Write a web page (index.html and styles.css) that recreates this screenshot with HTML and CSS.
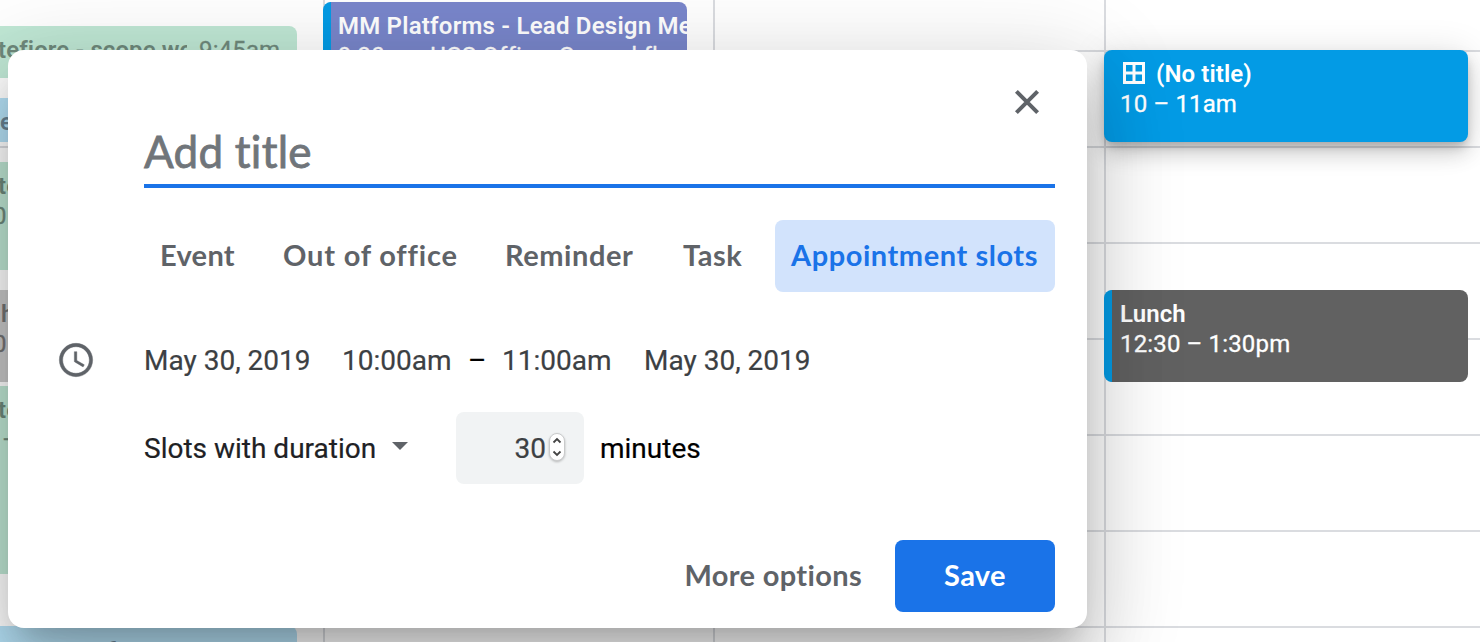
FILE: index.html
```
<!DOCTYPE html>
<html lang="en">
<head>
<meta charset="utf-8">
<title>Calendar</title>
<link rel="stylesheet" href="styles.css">
</head>
<body>
<main class="calendar">
  <section class="day day-first">
    <article class="event event-green event-scope"><b class="clip">tefiore - scope wo</b><span>9:45am</span></article>
    <article class="event event-blue event-e"><b>e</b></article>
    <article class="event event-green event-mid"><b>te</b><span>0</span></article>
    <article class="event event-grey"><b>h</b><span>0</span></article>
    <article class="event event-green event-long"><b>te</b><span class="dash">–</span></article>
    <article class="event event-blue event-last"><b>une can af</b></article>
  </section>
  <section class="day day-second">
    <article class="event striped event-platforms"><b>MM Platforms - Lead Design Meeting</b><span>9:30am, UCS Office, Ground floor</span></article>
  </section>
  <section class="day day-third"></section>
  <section class="day day-fourth">
    <article class="event event-slot">
      <b><svg class="grid-icon" viewBox="0 0 22 22"><path d="M1.5 1.5h19v19h-19zM11 1.5v19M1.5 11h19"/></svg>(No title)</b>
      <span>10 – 11am</span>
    </article>
    <article class="event striped event-lunch"><b>Lunch</b><span>12:30 – 1:30pm</span></article>
  </section>
</main>

<div class="dialog">
  <div class="dialog-top">
    <button class="close" aria-label="Close"><svg viewBox="0 0 28 28"><path d="M3.4 3.4l21.2 21.2M24.6 3.4L3.4 24.6"/></svg></button>
  </div>
  <div class="title"><span>Add title</span></div>
  <nav class="tabs">
    <span class="tab tab-event">Event</span>
    <span class="tab tab-office">Out of office</span>
    <span class="tab tab-reminder">Reminder</span>
    <span class="tab tab-task">Task</span>
    <span class="tab tab-slots">Appointment slots</span>
  </nav>
  <div class="when">
    <svg class="clock" viewBox="0 0 24 24"><path d="M11.99 2C6.47 2 2 6.48 2 12s4.47 10 9.99 10C17.52 22 22 17.52 22 12S17.52 2 11.99 2zM12 20c-4.42 0-8-3.58-8-8s3.58-8 8-8 8 3.58 8 8-3.58 8-8 8zm.5-13H11v6l5.25 3.15.75-1.23-4.5-2.67z"/></svg>
    <span class="date">May 30, 2019</span>
    <span class="start">10:00am</span>
    <span class="to">–</span>
    <span class="end">11:00am</span>
    <span class="date">May 30, 2019</span>
  </div>
  <div class="duration">
    <span class="mode">Slots with duration</span>
    <svg class="caret" viewBox="0 0 16 8"><path d="M0 0h16L8 8z"/></svg>
    <div class="amount"><span>30</span>
      <svg class="stepper" viewBox="0 0 16 28"><rect x=".5" y=".5" width="15" height="27" rx="7.5"/><path d="M4.5 9.5L8 6l3.5 3.5M4.5 18.5L8 22l3.5-3.5"/></svg>
    </div>
    <span class="unit">minutes</span>
  </div>
  <div class="actions">
    <span class="more">More options</span>
    <button class="save">Save</button>
  </div>
</div>
</body>
</html>
```
FILE: styles.css
```
* { box-sizing: border-box; }
body { margin: 0; width: 1480px; height: 642px; overflow: hidden; position: relative; background: #fff; font-family: Roboto, "Liberation Sans", sans-serif; }
button { border: 0; padding: 0; background: none; font: inherit; letter-spacing: inherit; }
svg { display: block; }

.calendar { display: flex; height: 642px; overflow: hidden; background: repeating-linear-gradient(#dadce0 0 2px, transparent 2px 96px) 0 50px / 100% 592px no-repeat; }
.day { flex: none; height: 642px; border-left: 2px solid #dadce0; }
.day-first { width: 323px; border-left: 0; }
.day-second { width: 390px; }
.day-third { width: 391px; }
.day-fourth { width: 376px; }

.event { overflow: hidden; white-space: nowrap; font-size: 24px; line-height: 30px; color: #fff; }
.event b { display: block; font-weight: 600; letter-spacing: .1px; }
.event span { display: block; letter-spacing: .15px; -webkit-text-stroke: .3px currentColor; }

.day-first .event { width: 297px; border-radius: 0 8px 8px 0; }
.event-green { background: #c0e8d5; color: #6f8a7c; }
.event-blue { background: #b5e1f6; color: #688291; }
.event-grey { background: #c9c9c9; color: #747474; height: 92px; margin-top: 20px; padding: 9px 0 0 1px; }
.event-grey span { margin-left: -8px; }
.day-first .event-scope { display: flex; gap: 12px; height: 52px; margin-top: 26px; padding-top: 9px; }
.clip { width: 187px; overflow: hidden; text-indent: -2px; }
.event-e { height: 44px; margin-top: 20px; padding-top: 9px; }
.event-mid { height: 108px; margin-top: 20px; padding-top: 9px; }
.event-mid b, .event-long b { margin-left: -2px; }
.event-mid span { margin-left: -7px; }
.event-long { height: 188px; margin-top: 4px; padding-top: 9px; }
.event-long .dash { margin-left: 2px; }
.event-last { height: 44px; margin-top: 52px; padding-top: 10px; }
.event-last b { padding-left: 3px; }

.striped { border-left: 8px solid #039be5; border-radius: 8px; }
.event-platforms { width: 364px; height: 92px; margin: 2px 0 0 -2px; padding: 9px 0 0 7px; background: #7986cb; }
.event-platforms b { letter-spacing: .22px; }
.event-slot { width: 364px; height: 92px; margin: 50px 0 0 -2px; padding: 9px 16px; border-radius: 8px; background: #039be5; box-shadow: 0 12px 20px rgba(0,0,0,.14), 0 2px 36px rgba(0,0,0,.12), 0 6px 10px -2px rgba(0,0,0,.2); }
.event-slot b { display: flex; align-items: center; gap: 11px; }
.grid-icon { width: 22px; height: 22px; margin: -2px 0 0 3px; fill: none; stroke: #fff; stroke-width: 3; }
.event-lunch { width: 364px; height: 92px; margin: 148px 0 0 -2px; padding: 9px 8px; background: #616161; }

.dialog { position: absolute; left: 8px; top: 50px; width: 1079px; height: 578px; padding: 0 32px 16px 136px; border-radius: 16px; background: #fff; box-shadow: 0 48px 76px 6px rgba(0,0,0,.14), 0 18px 92px 16px rgba(0,0,0,.12), 0 22px 30px -14px rgba(0,0,0,.2); display: flex; flex-direction: column; }
.dialog-top { display: flex; justify-content: flex-end; height: 74px; padding: 38px 14px 0 0; }
.close, .close svg { width: 28px; height: 28px; }
.close path { stroke: #5f6368; stroke-width: 4; fill: none; }
.title { height: 64px; border-bottom: 4px solid #1a73e8; font: 44px/54px Lato, sans-serif; font-variant-ligatures: none; letter-spacing: .25px; -webkit-text-stroke: .8px #70757a; color: #70757a; }
.tabs, .actions { font: bold 29px/70px Lato, sans-serif; font-variant-ligatures: none; letter-spacing: .55px; color: #5f6368; }
.tabs { display: flex; gap: 16px; height: 72px; margin-top: 32px; }
.tab { padding-left: 16px; border-radius: 8px; white-space: nowrap; }
.tab-event { width: 107px; letter-spacing: .3px; }
.tab-office { width: 206px; letter-spacing: .8px; }
.tab-reminder { width: 162px; }
.tab-task { width: 92px; }
.tab-slots { width: 280px; margin-left: auto; background: #d2e3fc; color: #1a73e8; }
.when { display: flex; align-items: center; height: 40px; margin: 48px 0 0 -88px; font-size: 28px; color: #3c4043; white-space: nowrap; -webkit-text-stroke: .2px currentColor; }
.clock { width: 40px; height: 40px; margin-right: 48px; fill: #5f6368; stroke: #5f6368; stroke-width: .25; }
.date { width: 198px; }
.start { width: 126px; }
.to { width: 34px; color: #000; }
.end { width: 142px; }
.duration { display: flex; align-items: center; height: 72px; margin-top: 32px; font-size: 28px; color: #202124; white-space: nowrap; -webkit-text-stroke: .2px currentColor; }
.mode { width: 248px; }
.caret { width: 16px; height: 8px; margin-top: -4px; fill: #5f6368; }
.amount { display: flex; align-items: center; justify-content: flex-end; gap: 3px; width: 128px; height: 72px; margin: 0 16px 0 48px; padding-right: 19px; border-radius: 8px; background: #f1f3f4; color: #3c4043; }
.stepper { width: 16px; height: 28px; margin-top: -2px; filter: drop-shadow(0 1px 1px rgba(0,0,0,.25)); }
.stepper rect { fill: #fff; stroke: #c9cacb; }
.stepper path { fill: none; stroke: #444; stroke-width: 1.8; }
.unit { color: #000; }
.actions { display: flex; justify-content: flex-end; gap: 33px; height: 72px; margin-top: auto; letter-spacing: .35px; }
.save { width: 160px; height: 72px; padding-bottom: 2px; border-radius: 8px; background: #1a73e8; color: #fff; }
```
